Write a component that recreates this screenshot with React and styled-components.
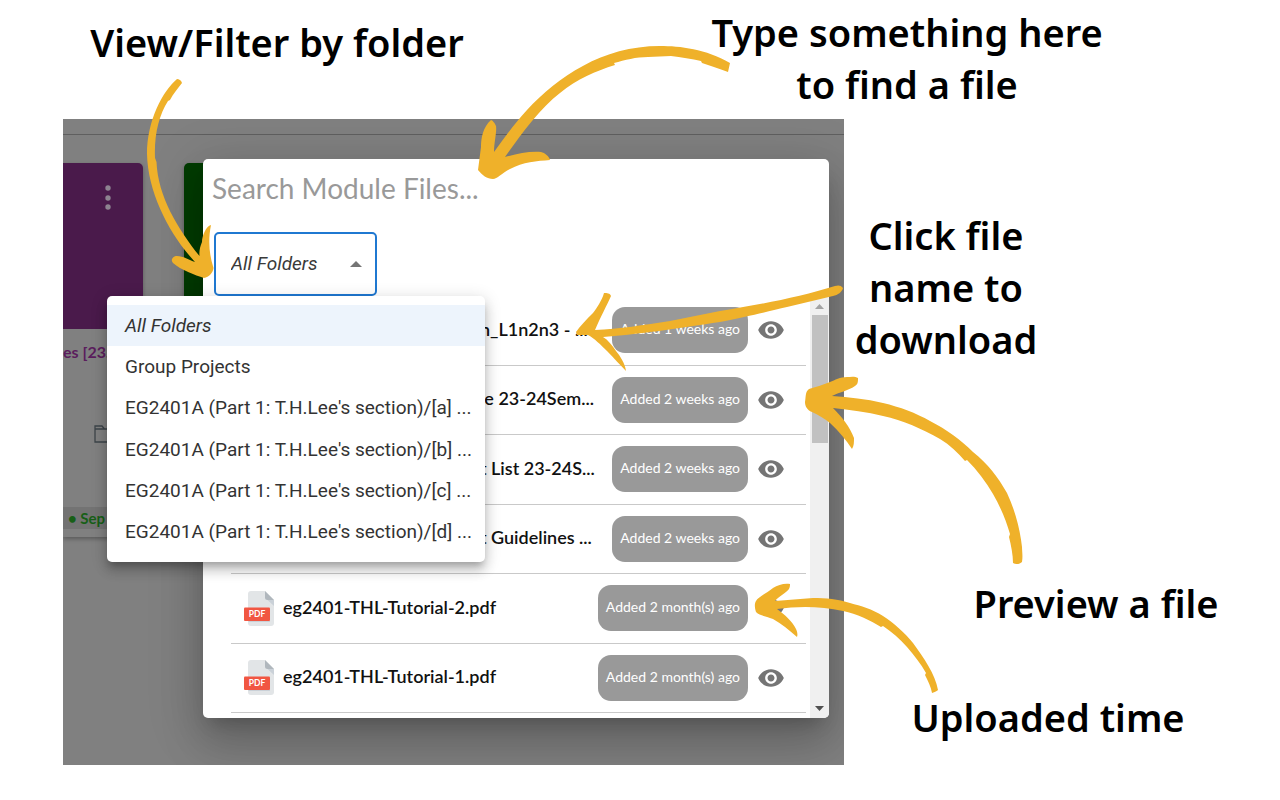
import React from "react";
import styled, { createGlobalStyle } from "styled-components";

const GlobalStyle = createGlobalStyle`
  *, *::before, *::after { box-sizing: border-box; }
  body { margin: 0; background: #fff; }
  ul { list-style: none; margin: 0; padding: 0; }
`;

const Board = styled.main`
  position: relative;
  max-width: 1280px;
  min-height: 800px;
`;

const TopCaptions = styled.header`
  display: flex;
  align-items: flex-start;
  min-height: 119px;
  padding: 6px 0 0 63px;
`;

const Caption = styled.p`
  margin: 0;
  color: #000;
  font: 600 38px/52px "Noto Sans", sans-serif;
  text-align: center;
`;

const TopLeftCaption = styled(Caption)`
  width: 428px;
  padding-top: 10px;
`;

const TopRightCaption = styled(Caption)`
  flex: 1;
  padding-left: 43px;
`;

const Body = styled.div`
  display: flex;
  padding-left: 63px;
`;

const SideCaptions = styled.aside`
  width: 436px;
  display: flex;
  flex-direction: column;
  padding: 90px 0 0 0;
`;

const ClickCaption = styled(Caption)`
  width: 204px;
`;

const PreviewCaption = styled(Caption)`
  padding: 212px 0 0 68px;
`;

const UploadCaption = styled(Caption)`
  padding: 62px 28px 0 0;
`;

const Frame = styled.section`
  position: relative;
  flex: 1;
  height: 646px;
  overflow: hidden;
  background: #808080;
`;

const AppBar = styled.div`
  height: 16px;
  border-bottom: 1px solid #5f5f5f;
`;

const Cards = styled.div`
  display: flex;
  gap: 41px;
  padding-top: 28px;
`;

const Card = styled.article`
  width: ${(p) => p.$width};
  height: 374px;
  border-radius: ${(p) => p.$radius};
  overflow: hidden;
  background: #808080;
  box-shadow: 0 2px 4px rgba(0, 0, 0, 0.3);
`;

const CardCover = styled.div`
  display: flex;
  justify-content: flex-end;
  height: 166px;
  padding: 20px 32px;
  background: ${(p) => p.$color};
`;

const CardTitle = styled.a`
  display: block;
  padding: 12px 0 0;
  color: #5b1d5d;
  font: 700 16px/22px Lato, sans-serif;
  text-decoration: none;
  white-space: nowrap;
`;

const CardTools = styled.div`
  display: flex;
  padding: 61px 0 0 30px;
  height: 144px;
`;

const CardDates = styled.div`
  padding-left: 5px;
  background: #737373;
  color: #175f17;
  font: 700 15px/22px Lato, sans-serif;
  white-space: nowrap;
`;

const Dialog = styled.div`
  position: absolute;
  top: 40px;
  left: 140px;
  right: 15px;
  height: 559px;
  display: flex;
  flex-direction: column;
  overflow: hidden;
  border-radius: 5px;
  background: #fff;
  box-shadow: 0 12px 17px -8px rgba(0, 0, 0, 0.2),
    0 27px 43px 3px rgba(0, 0, 0, 0.14), 0 10px 52px 9px rgba(0, 0, 0, 0.12);
`;

const SearchBox = styled.input`
  width: 100%;
  height: 58px;
  padding: 0 9px;
  border: 0;
  outline: 0;
  background: transparent;
  color: #333;
  font: 400 28px/36px Lato, sans-serif;
  &::placeholder { color: #999; opacity: 1; }
`;

const FilterBar = styled.div`
  padding: 15px 11px 0;
`;

const FilterField = styled.div`
  position: relative;
  width: 163px;
`;

const FolderSelect = styled.select`
  appearance: none;
  display: block;
  width: 100%;
  height: 64px;
  padding: 0 15px;
  border: 2px solid #1f78d1;
  border-radius: 5px;
  background: #fff;
  color: #3a3a3a;
  font: italic 400 19px/24px Roboto, sans-serif;
`;

const SelectCaret = styled.svg`
  position: absolute;
  right: 15px;
  top: 29px;
  pointer-events: none;
`;

const ScrollArea = styled.div`
  display: flex;
  flex: 1;
  min-height: 0;
`;

const FileList = styled.ul`
  flex: 1;
  min-width: 0;
  display: grid;
  grid-auto-rows: 1fr;
  height: 417px;
  margin: 0 4px 0 28px;
`;

const FileRow = styled.li`
  display: flex;
  align-items: center;
  padding: 0 21px 0 13px;
  border-bottom: 1px solid #c9c9c9;
`;

const FileName = styled.a`
  flex: 1;
  min-width: 0;
  margin-left: 9px;
  padding-bottom: 3px;
  padding-left: ${(p) => (p.$covered ? "197px" : "0")};
  color: #111;
  font: 600 18px/24px Lato, sans-serif;
  text-decoration: none;
  white-space: nowrap;
`;

const AddedBadge = styled.span`
  height: 46px;
  margin-left: 10px;
  padding: 0 8px;
  border-radius: 13px;
  background: #999;
  color: #fff;
  font: 400 14px/44px Lato, sans-serif;
  white-space: nowrap;
`;

const PreviewButton = styled.button`
  display: flex;
  margin-left: 9px;
  padding: 0;
  border: 0;
  background: none;
`;

const ScrollTrack = styled.div`
  width: 19px;
  display: flex;
  flex-direction: column;
  align-items: center;
  background: #f0f0f0;
`;

const ScrollThumb = styled.div`
  width: 16px;
  height: 128px;
  margin-bottom: auto;
  background: #c1c1c1;
`;

const ScrollArrow = styled.svg`
  display: block;
  flex: none;
`;

const Menu = styled.ul`
  position: absolute;
  top: 177px;
  left: 44px;
  display: grid;
  grid-template-columns: minmax(0, 1fr);
  grid-auto-rows: 1fr;
  width: 378px;
  height: 266px;
  && { padding: 9px 0; }
  border-radius: 5px;
  background: #fff;
  box-shadow: 0 6px 6px -3px rgba(0, 0, 0, 0.2),
    0 9px 12px 1px rgba(0, 0, 0, 0.14), 0 3px 16px 2px rgba(0, 0, 0, 0.12);
`;

const MenuRow = styled.li`
  display: flex;
`;

const MenuItem = styled.button`
  flex: 1;
  padding: 0 0 0 18px;
  border: 0;
  background: ${(p) => (p.$selected ? "#edf4fc" : "transparent")};
  color: #333;
  font: ${(p) => (p.$selected ? "italic" : "normal")} 400 19px/24px Roboto, sans-serif;
  text-align: left;
  white-space: nowrap;
`;

const Arrows = styled.svg`
  position: absolute;
  top: 0;
  left: 0;
  pointer-events: none;
`;

const folders = [
  "All Folders",
  "Group Projects",
  "EG2401A (Part 1: T.H.Lee's section)/[a] ...",
  "EG2401A (Part 1: T.H.Lee's section)/[b] ...",
  "EG2401A (Part 1: T.H.Lee's section)/[c] ...",
  "EG2401A (Part 1: T.H.Lee's section)/[d] ...",
];

const files = [
  { name: "n_L1n2n3 - ...", added: "Added 1 weeks ago", covered: true },
  { name: "le 23-24Sem...", added: "Added 2 weeks ago", covered: true },
  { name: "t List 23-24S...", added: "Added 2 weeks ago", covered: true },
  { name: "t Guidelines ...", added: "Added 2 weeks ago", covered: true },
  { name: "eg2401-THL-Tutorial-2.pdf", added: "Added 2 month(s) ago" },
  { name: "eg2401-THL-Tutorial-1.pdf", added: "Added 2 month(s) ago" },
];

const arrowPaths = [
  "M177 79C163 91 147 120 147 154C148 194 170 235 195 262C189 260 183 256 177 256C173 256 170 260 173 263C181 270 195 275 204 278C209 277 213 273 213.5 268C209 254 208 240 211 225C206 226 202 236 202 242C200 247 199 251 199.5 256C178 229 158 197 156.5 162L155 158C154 135 159 115 168 101L170 100C173 94 178 88 182 83C181 80 179 79 177 79Z",
  "M730 63C706 49 680 46 660 46C602 46 558 77 527 110C515 123 504 138 494 152C494 142 497 132 496 126C495 123 492 120 491 120C483 127 481 138 481 147L478 170C482 175 487 179 493 179C497 179 502 173 510 169C523 162 537 161 550 160C549 156 545 153 541 152C529 151 517 154 505 157C520 136 540 108 560 93C577 79 596 71 615 65L614 63C625 60 636 57 648 57L671 56C681 57 692 59 701 61L702 63C711 66 720 69 728 72Z",
  "M843 288C841 285 838 285 835 286C800 297 758 305 720 311L670 321C644 325 619 329 595 330C601 316 607 305 611 296C610 293 607 293 604 293C602 300 597 308 593 313C586 320 580 326 576 332L577 335L588 335C594 338 601 345 607 351C614 358 620 365 626 371C625 363 620 356 616 351C612 345 608 340 603 337C650 333 680 328 720 322C750 316 770 311 787 307L833 296C838 295 842 292 843 288Z",
  "M1022 562C1023 556 1022 551 1022 547C1020 529 1015 510 1007 493C998 477 988 464 973 452C961 440 946 429 930 421C916 413 900 407 883 403C866 399 849 397 832 396C839 392 848 391 855 386C858 384 858 382 858 378C855 376 850 377 847 377C840 377 835 380 830 382C823 385 815 387 809 389C805 392 806 397 805 402C805 406 807 410 812 412C819 415 825 419 830 423C839 431 846 440 852 449C854 446 854 442 854 438C850 427 842 417 833 408C850 410 867 412 883 416C903 420 922 429 940 439C950 445 958 453 965 461L967 460C977 470 986 482 993 494C1000 506 1006 520 1010 534L1009 537C1011 545 1013 555 1013 563C1016 565 1020 564 1022 562Z",
  "M938 690C935 674 924 658 913 643C905 633 894 623 883 616C872 609 861 606 850 603C838 599 826 598 813 598C800 599 788 600 775 601C778 597 786 593 789 589C790 587 790 585 790 584C784 583 778 585 773 588C767 593 758 597 756 601C754 604 755 609 756 612C760 616 766 616 773 619C782 624 789 630 797 637C798 634 797 631 796 629C792 621 785 615 777 609C798 606 821 606 843 611C857 614 870 620 881 627L883 626C892 632 900 639 907 647C914 655 921 664 926 673L925 675C928 681 931 687 932 693C935 692 937 691 938 690Z",
];

function PdfIcon() {
  return (
    <svg width="30" height="35" viewBox="0 0 30 35" aria-hidden="true">
      <path d="M7 0H21L30 9V32Q30 35 27 35H7Q4 35 4 32V3Q4 0 7 0Z" fill="#e2e5e7" />
      <path d="M21 0L30 9H23.5Q21 9 21 6.500Z" fill="#b0b7bd" />
      <path d="M23.500 9H30V15Z" fill="#cad1d8" />
      <path d="M4 30H26V31H5Z" fill="#cad1d8" />
      <rect x="0" y="16.500" width="26" height="13.500" rx="1" fill="#f15642" />
      <text x="13" y="26.300" fill="#fff" fontFamily="Lato, sans-serif" fontSize="8.500" fontWeight="700" textAnchor="middle">PDF</text>
    </svg>
  );
}

function EyeIcon() {
  return (
    <svg width="28" height="28" viewBox="0 0 24 24" fill="#757575" aria-hidden="true">
      <path d="M12 4.500C7 4.500 2.730 7.610 1 12c1.730 4.390 6 7.500 11 7.500s9.270-3.110 11-7.500c-1.730-4.390-6-7.500-11-7.500zM12 17c-2.760 0-5-2.240-5-5s2.240-5 5-5 5 2.240 5 5-2.240 5-5 5zm0-8c-1.660 0-3 1.340-3 3s1.340 3 3 3 3-1.340 3-3-1.340-3-3-3z" />
    </svg>
  );
}

export default function App() {
  return (
    <Board>
      <GlobalStyle />
      <TopCaptions>
        <TopLeftCaption>View/Filter by folder</TopLeftCaption>
        <TopRightCaption>
          Type something here
          <br />
          to find a file
        </TopRightCaption>
      </TopCaptions>
      <Body>
        <Frame>
          <AppBar />
          <Cards>
            <Card $width="80px" $radius="0 5px 5px 0">
              <CardCover $color="#4a1a4b">
                <svg width="6" height="30" viewBox="0 0 6 30" fill="#8d8390" aria-hidden="true">
                  <circle cx="3" cy="5" r="2.700" />
                  <circle cx="3" cy="15" r="2.700" />
                  <circle cx="3" cy="24" r="2.700" />
                </svg>
              </CardCover>
              <CardTitle href="#module">es [23.</CardTitle>
              <CardTools>
                <svg width="22" height="20" viewBox="0 0 22 20" fill="none" stroke="#3d4449" strokeWidth="1.300" aria-hidden="true">
                  <path d="M2 18V2H9L11.500 5H20V18ZM2 5H11" />
                </svg>
              </CardTools>
              <CardDates>• Sep</CardDates>
            </Card>
            <Card $width="100px" $radius="5px">
              <CardCover $color="#003c00" />
            </Card>
          </Cards>
          <Dialog role="dialog" aria-label="Module files">
            <SearchBox type="text" aria-label="Search Module Files" placeholder="Search Module Files..." />
            <FilterBar>
              <FilterField>
                <FolderSelect aria-label="Folder" defaultValue="All Folders">
                  {folders.map((f) => (
                    <option key={f}>{f}</option>
                  ))}
                </FolderSelect>
                <SelectCaret width="12" height="6" viewBox="0 0 12 6" aria-hidden="true">
                  <path d="M0 6L6 0L12 6Z" fill="#757575" />
                </SelectCaret>
              </FilterField>
            </FilterBar>
            <ScrollArea>
              <FileList>
                {files.map((f) => (
                  <FileRow key={f.name}>
                    <PdfIcon />
                    <FileName href="#file" $covered={f.covered}>{f.name}</FileName>
                    <AddedBadge>{f.added}</AddedBadge>
                    <PreviewButton type="button" aria-label="Preview file">
                      <EyeIcon />
                    </PreviewButton>
                  </FileRow>
                ))}
              </FileList>
              <ScrollTrack aria-hidden="true">
                <ScrollArrow width="19" height="19" viewBox="0 0 19 19">
                  <path d="M5 13L9.500 8L14 13Z" fill="#a3a3a3" />
                </ScrollArrow>
                <ScrollThumb />
                <ScrollArrow width="19" height="18" viewBox="0 0 19 18">
                  <path d="M5 6L9.500 11L14 6Z" fill="#505050" />
                </ScrollArrow>
              </ScrollTrack>
            </ScrollArea>
          </Dialog>
          <Menu aria-label="Folders">
            {folders.map((f, i) => (
              <MenuRow key={f}>
                <MenuItem type="button" $selected={i === 0}>
                  {f}
                </MenuItem>
              </MenuRow>
            ))}
          </Menu>
        </Frame>
        <SideCaptions>
          <ClickCaption>
            Click file
            <br />
            name to
            <br />
            download
          </ClickCaption>
          <PreviewCaption>Preview a file</PreviewCaption>
          <UploadCaption>Uploaded time</UploadCaption>
        </SideCaptions>
      </Body>
      <Arrows width="1280" height="800" viewBox="0 0 1280 800" fill="#efb12a" aria-hidden="true">
        {arrowPaths.map((d) => (
          <path key={d} d={d} />
        ))}
      </Arrows>
    </Board>
  );
}
